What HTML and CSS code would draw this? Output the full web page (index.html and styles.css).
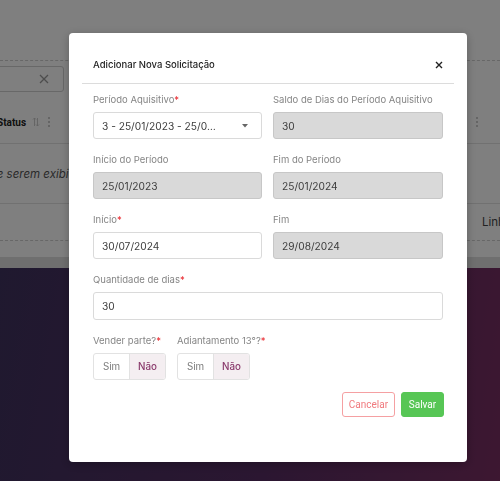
FILE: index.html
```html
<!DOCTYPE html>
<html lang="pt-BR">
<head>
<meta charset="utf-8">
<title>Solicitações de Férias</title>
<link rel="stylesheet" href="styles.css">
</head>
<body>
  <div class="page">
    <section class="card">
      <div class="card-top"></div>
      <div class="toolbar">
        <div class="search">
          <svg class="search-clear" viewBox="0 0 10 10" width="10" height="10"><path d="M1 1 L9 9 M9 1 L1 9" stroke="#9a9a9a" stroke-width="1.3" fill="none"/></svg>
        </div>
      </div>
      <div class="thead">
        <div class="th">
          <span class="th-label">Status</span>
          <svg class="th-sort" viewBox="0 0 8 10" width="8" height="10"><path d="M2.5 9 V1 M1 2.5 L2.5 1 L4 2.5 M5.5 1 V9 M4 7.5 L5.5 9 L7 7.5" stroke="#c4c4c4" stroke-width="0.9" fill="none"/></svg>
          <span class="kebab"><i></i><i></i><i></i></span>
        </div>
        <span class="kebab"><i></i><i></i><i></i></span>
      </div>
      <div class="tempty"><span class="tempty-text">Não há registros passíveis de serem exibidos</span></div>
      <div class="tfoot"><span>Linhas por página</span></div>
    </section>
    <div class="scroll-band"></div>
    <div class="page-footer"></div>
  </div>

  <div class="backdrop"></div>

  <div class="modal" role="dialog">
    <header class="modal-header">
      <h2 class="modal-title">Adicionar Nova Solicitação</h2>
      <svg class="modal-close" viewBox="0 0 8 8" width="8" height="8"><path d="M1 1 L7 7 M7 1 L1 7" stroke="#222" stroke-width="1.4" fill="none"/></svg>
    </header>
    <div class="modal-body">
      <div class="form-grid">
        <div class="field">
          <label class="field-label">Período Aquisitivo<span class="req">*</span></label>
          <div class="input select">
            <span class="select-value">3 - 25/01/2023 - 25/01/2024</span>
            <svg class="caret" viewBox="0 0 6 4" width="6" height="4"><path d="M0 0 H6 L3 3.5 Z" fill="#666"/></svg>
          </div>
        </div>
        <div class="field">
          <label class="field-label">Saldo de Dias do Período Aquisitivo</label>
          <div class="input disabled">30</div>
        </div>
        <div class="field">
          <label class="field-label">Início do Período</label>
          <div class="input disabled">25/01/2023</div>
        </div>
        <div class="field">
          <label class="field-label">Fim do Período</label>
          <div class="input disabled">25/01/2024</div>
        </div>
        <div class="field">
          <label class="field-label">Início<span class="req">*</span></label>
          <div class="input">30/07/2024</div>
        </div>
        <div class="field">
          <label class="field-label">Fim</label>
          <div class="input disabled">29/08/2024</div>
        </div>
        <div class="field span-2">
          <label class="field-label">Quantidade de dias<span class="req">*</span></label>
          <div class="input tall">30</div>
        </div>
        <div class="field span-2 toggles">
          <div class="toggle-group">
            <label class="field-label">Vender parte?<span class="req">*</span></label>
            <div class="toggle">
              <span class="opt">Sim</span>
              <span class="opt active">Não</span>
            </div>
          </div>
          <div class="toggle-group">
            <label class="field-label">Adiantamento 13°?<span class="req">*</span></label>
            <div class="toggle">
              <span class="opt">Sim</span>
              <span class="opt active">Não</span>
            </div>
          </div>
        </div>
      </div>
      <div class="actions">
        <button class="btn btn-cancel" type="button">Cancelar</button>
        <button class="btn btn-save" type="button">Salvar</button>
      </div>
    </div>
  </div>
</body>
</html>
```

FILE: styles.css
```css
html, body {
  margin: 0;
  height: 100%;
}

body {
  font-family: Inter, "Noto Sans", sans-serif;
  overflow: hidden;
  background: #fff;
}

/* ---------- page behind the dialog ---------- */
.page {
  height: 481px;
  display: flex;
  flex-direction: column;
}

.card {
  height: 257px;
  background: #fff;
  overflow: hidden;
  display: flex;
  flex-direction: column;
}

.card-top {
  height: 60px;
  border-bottom: 1px dashed #cfcfcf;
  flex: none;
}

.toolbar {
  height: 40px;
  padding-top: 5px;
  box-sizing: border-box;
  flex: none;
}

.search {
  width: 90px;
  height: 26px;
  margin-left: -26px;
  box-sizing: border-box;
  border: 1px solid #d0d0d0;
  border-radius: 3px;
  display: flex;
  align-items: center;
  justify-content: flex-end;
  padding-right: 14px;
}

.thead {
  height: 42px;
  flex: none;
  border-bottom: 1px solid #e2e2e2;
  display: flex;
  align-items: center;
  justify-content: space-between;
  padding: 0 22px 0 0;
  margin-left: -3px;
}

.th {
  display: flex;
  align-items: center;
}

.th-label {
  font-family: Roboto, Inter, sans-serif;
  font-size: 10px;
  font-weight: 700;
  color: #222;
}

.th-sort {
  margin-left: 6px;
}

.th .kebab {
  margin-left: 8px;
}

.kebab {
  display: inline-flex;
  flex-direction: column;
  gap: 2px;
}

.kebab i {
  width: 2px;
  height: 2px;
  border-radius: 50%;
  background: #b9b9b9;
}

.tempty {
  height: 59px;
  flex: none;
  border-bottom: 1px solid #e2e2e2;
  display: flex;
  align-items: center;
  overflow: hidden;
}

.tempty-text {
  font-size: 11.5px;
  font-style: italic;
  color: #555;
  white-space: nowrap;
  margin-left: -158px;
}

.tfoot {
  height: 36px;
  flex: none;
  border-bottom: 1px dashed #cfcfcf;
  display: flex;
  align-items: center;
  padding-left: 482px;
  font-size: 11.5px;
  color: #444;
  white-space: nowrap;
}

.scroll-band {
  height: 11px;
  background: #dedede;
  flex: none;
}

.page-footer {
  flex: 1;
  background: linear-gradient(100deg, #3f325f 0%, #562d62 55%, #7a2f63 100%);
}

.backdrop {
  position: fixed;
  inset: 0;
  background: rgba(0, 0, 0, 0.5);
}

/* ---------- dialog ---------- */
.modal {
  position: fixed;
  left: 69px;
  top: 33px;
  width: 398px;
  height: 429px;
  background: #fff;
  border-radius: 4px;
  box-shadow: 0 2px 10px rgba(0, 0, 0, 0.25);
  color: #444;
}

.modal-header {
  margin: 0 13px;
  padding: 25px 11px 12px;
  border-bottom: 1px solid #dcdcdc;
  display: flex;
  align-items: center;
  justify-content: space-between;
}

.modal-title {
  margin: 0;
  font-size: 9.5px;
  line-height: 13px;
  font-weight: 500;
  color: #1e1e1e;
}

.modal-body {
  padding: 9px 23px 0 24px;
}

.form-grid {
  display: grid;
  grid-template-columns: 169px 170px;
  column-gap: 11px;
  row-gap: 14px;
}

.span-2 {
  grid-column: 1 / -1;
}

.field-label {
  display: block;
  font-size: 9.5px;
  line-height: 14px;
  color: #858585;
  margin-bottom: 5px;
  white-space: nowrap;
}

.req {
  color: #e8282e;
}

.input {
  height: 27px;
  box-sizing: border-box;
  border: 1px solid #dadada;
  border-radius: 3px;
  padding: 0 8px;
  display: flex;
  align-items: center;
  font-size: 10.2px;
  color: #3c3c3c;
  background: #fff;
}

.input.tall {
  height: 28px;
}

.input.disabled {
  background: #d9d9d9;
  border-color: #c7c7c7;
}

.select {
  justify-content: space-between;
  padding-right: 13px;
}

.select-value {
  width: 117px;
  overflow: hidden;
  white-space: nowrap;
  text-overflow: ellipsis;
}

.toggles {
  display: flex;
  gap: 11px;
}

.toggle {
  width: 73px;
  height: 27px;
  box-sizing: border-box;
  border: 1px solid #e2e2e2;
  border-radius: 3px;
  display: flex;
  overflow: hidden;
}

.opt {
  flex: 1;
  display: flex;
  align-items: center;
  justify-content: center;
  font-size: 9.8px;
  color: #7a7a7a;
}

.opt + .opt {
  border-left: 1px solid #e2e2e2;
}

.opt.active {
  background: #f4eef1;
  color: #8a3a6c;
  font-weight: 500;
}

.actions {
  margin-top: 12px;
  display: flex;
  justify-content: flex-end;
  gap: 6px;
}

.btn {
  height: 25px;
  box-sizing: border-box;
  border-radius: 3px;
  font-family: Roboto, Inter, sans-serif;
  font-size: 10px;
  padding: 0;
  cursor: pointer;
}

.btn-cancel {
  width: 53px;
  background: #fff;
  border: 1px solid #f5a0a2;
  color: #f07a7e;
}

.btn-save {
  width: 43px;
  background: #57c655;
  border: 1px solid #57c655;
  color: #fff;
}
```
